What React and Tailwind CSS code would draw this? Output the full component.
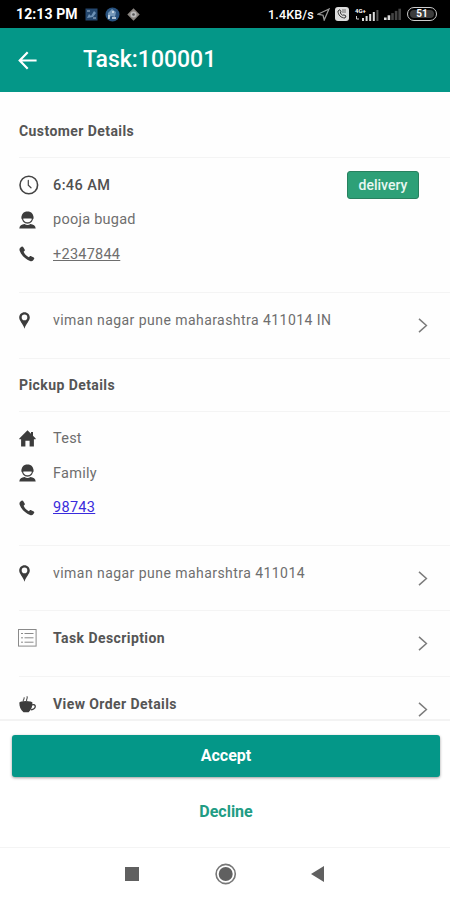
import React from "react";

const ClockIcon = () => (
  <svg width="20" height="20" viewBox="0 0 20 20" fill="none" stroke="#444" strokeWidth="1.6" strokeLinecap="round">
    <circle cx="9.8" cy="10" r="8.8" />
    <path d="M9.3 5.4V10.2L12 12.8" strokeWidth="1.2" />
  </svg>
);

const PersonIcon = () => (
  <svg width="17" height="18" viewBox="0 0 17 18">
    <path d="M3.2 5.5C3 9.5 5.4 12 8.5 12S14 9.5 13.8 5.5" fill="#fff" stroke="#4a4a4a" strokeWidth="1.3" />
    <path d="M2.7 8C1.9 3.2 4.6.6 8.5.6S15.1 3.2 14.3 8C12.8 7.6 10.6 7.6 8.5 7.6S4.2 7.6 2.7 8Z" fill="#3c3c3c" />
    <path d="M.3 17.4C.6 14.8 2.6 13.6 5.6 13.1 7.3 14.3 9.7 14.3 11.4 13.1 14.4 13.6 16.4 14.8 16.7 17.4Z" fill="#3c3c3c" />
  </svg>
);

const PhoneIcon = () => (
  <svg width="16" height="16" viewBox="0 0 17 17">
    <path d="M1.3 1.8 2.7.7C3.3.2 4 .4 4.4 1L6 3.7C6.4 4.4 6.2 4.9 5.7 5.4L4.9 6.2C5.8 8.4 7.8 10.7 10.4 12L11.3 11.1C11.8 10.6 12.4 10.6 13 10.9L15.7 12.3C16.3 12.7 16.4 13.3 16 13.9L14.9 15.4C14.2 16.2 12.9 16.4 11.7 15.9 6.5 14 2.3 9.5.7 5 .3 3.7.5 2.5 1.3 1.8Z" fill="#3c3c3c" />
  </svg>
);

const PinIcon = () => (
  <svg className="ml-px" width="11" height="17" viewBox="0 0 11 17">
    <path fillRule="evenodd" d="M5.5.3C2.5.3.2 2.6.2 5.5.2 8.8 3.9 11.5 5.5 16.7 7.1 11.5 10.8 8.8 10.8 5.5 10.8 2.6 8.5.3 5.5.3ZM5.5 2.6A2.8 2.8 0 1 1 5.5 8.2 2.8 2.8 0 0 1 5.5 2.6Z" fill="#3c3c3c" />
  </svg>
);

const HomeIcon = () => (
  <svg width="17" height="17" viewBox="0 0 17 17">
    <path d="M8.5.3.3 8.4V9.2H2.1V16.6H6.4V10.7H10.6V16.6H14.9V9.2H16.7V8.4L14 5.7V2H12V3.7Z" fill="#3c3c3c" />
  </svg>
);

const ListIcon = () => (
  <svg width="19" height="18" viewBox="0 0 19 18" fill="none" stroke="#8a8a8a">
    <rect x=".5" y=".5" width="17.6" height="16.6" />
    <path d="M3 4.5H5M3 8.8H5M3 13.2H5M6.5 4.5H15.5M6.5 8.8H15.5M6.5 13.2H15.5" />
  </svg>
);

const CupIcon = () => (
  <svg className="ml-px" width="18" height="17" viewBox="0 0 18 17">
    <path d="M.4 6.6C3 8 11 8 13.4 6.6 13.7 10.5 12.2 14 9.6 16.2H4.5C1.7 14 .1 10.5.4 6.6Z" fill="#3c3c3c" />
    <ellipse cx="6.9" cy="6.7" rx="6.4" ry="1.7" fill="#3c3c3c" />
    <path d="M13 8.8C17.4 7.5 17.6 12.8 12 13.8" fill="none" stroke="#3c3c3c" strokeWidth="1.3" />
    <path d="M4.8 6C3 4 6 3.2 4.9 1.4M8.3 6C5.8 3.7 9.6 2.6 7.8.3" fill="none" stroke="#555" strokeWidth="1.1" />
  </svg>
);

const Chevron = () => (
  <svg width="10" height="15" viewBox="0 0 10 15" fill="none" stroke="#7c7c7c" strokeWidth="1.5">
    <path d="M1 .9 8.4 7.5 1 14.1" />
  </svg>
);

function Signal({ active }) {
  return (
    <svg width="18" height="12" viewBox="0 0 18 12">
      {[0, 1, 2, 3, 4].map((i) => (
        <rect key={i} x={i * 3.6} y={9.5 - i * 2.2} width="2.6" height={2.5 + i * 2.2} fill={i < active ? "#ddd" : "#444"} />
      ))}
    </svg>
  );
}

function StatusBar() {
  return (
    <div className="flex h-7 shrink-0 items-center bg-black pl-4 pr-[13px] text-white">
      <span className="w-[62px] whitespace-nowrap pt-px text-[14px] font-bold tracking-[0.1px]">12:13 PM</span>
      <svg className="ml-[7px]" width="13" height="13" viewBox="0 0 13 13">
        <rect x=".5" y=".5" width="12" height="12" fill="#24476e" />
        <path d="M2 10 4 6 6 8 9 3 11 5 8 9Z" fill="#6d91b5" />
        <path d="M2 3H5M8 10H11" stroke="#a8bed1" />
      </svg>
      <svg className="ml-[7px]" width="15" height="15" viewBox="0 0 15 15">
        <circle cx="7.5" cy="7.5" r="7" fill="#28527f" />
        <path d="M3 6 7 2 11 5 10 10 6 9 3 12Z" fill="#7598b9" />
        <path d="M4 8V12M7 11H11M7 5H9" stroke="#dbe6ee" strokeWidth="1.4" />
      </svg>
      <svg className="ml-[7px]" width="13" height="13" viewBox="0 0 13 13">
        <path d="M6.5.3 12.7 6.5 6.5 12.7.3 6.5Z" fill="#8a8580" />
        <circle cx="6.5" cy="6.5" r="3" fill="#bbb" />
        <circle cx="6.5" cy="6.5" r="1.3" fill="#555" />
      </svg>
      <span className="ml-auto w-[48px] whitespace-nowrap pt-[2px] text-[12.5px] font-medium tracking-[0.15px]">1.4KB/s</span>
      <svg className="ml-px" width="13" height="13" viewBox="0 0 13 13" fill="none" stroke="#999" strokeWidth="1.3">
        <path d="M12 1 .9 6.2 6 7.2 7.2 12Z" />
      </svg>
      <svg className="ml-[5px]" width="14" height="14" viewBox="0 0 14 14">
        <rect width="14" height="14" rx="3" fill="#ddd" />
        <path d="M3 4C3 8 6 11 10 11L11 9 8.8 7.8 7.8 8.6 5.3 6 6 4.8 4.8 2.7Z" fill="none" stroke="#333" />
        <path d="M7 3H11M7 5H11" stroke="#555" strokeWidth=".8" />
      </svg>
      <div className="ml-[6px] flex h-[14px] w-[24px] items-end">
        <div className="flex h-[14px] w-[6px] flex-col justify-between">
          <span className="whitespace-nowrap text-[6px] font-bold leading-[7px]">4G+</span>
          <svg width="5" height="5" viewBox="0 0 5 5"><path d="M1.5 0V3H4" fill="none" stroke="#ccc" /></svg>
        </div>
        <svg width="18" height="11" viewBox="0 0 18 11">
          <path d="M1 8H3V11H1ZM4.6 6H6.6V11H4.6ZM8.2 4H10.2V11H8.2ZM11.8 2H13.8V11H11.8Z" fill="#ddd" />
          <path d="M15.4 0H17.4V11H15.4Z" fill="#555" />
        </svg>
      </div>
      <div className="ml-[5px] flex"><Signal active={2} /></div>
      <div className="ml-[5px] flex h-[14px] w-[30px] items-center justify-center rounded-full border-[1.5px] border-[#ccc] p-[2px]">
        <div className="flex h-full w-full items-center justify-center rounded-full bg-[#3c3c3c] text-[10px] font-bold leading-none">51</div>
      </div>
    </div>
  );
}

function SectionTitle({ children, className }) {
  return (
    <div className={`flex items-center border-b border-[#f4f4f4] ${className}`}>
      <h2 className="text-[14px] font-bold tracking-[0.42px] text-[#555]">{children}</h2>
    </div>
  );
}

function Row({ icon, children, className = "", right }) {
  return (
    <div className="flex h-[34.5px] items-center pr-[31px]">
      <div className="flex w-[34px] shrink-0 items-center">{icon}</div>
      <span className={`whitespace-nowrap pt-px text-[14.5px] leading-5 ${className}`}>{children}</span>
      {right}
    </div>
  );
}

function LinkRow({ icon, children, className = "", textClass }) {
  return (
    <div className={`flex border-b border-[#f4f4f4] pr-[22px] pt-[17px] ${className}`}>
      <div className="-ml-px flex h-5 w-[35px] shrink-0 items-center">{icon}</div>
      <span className={`whitespace-nowrap leading-5 ${textClass}`}>{children}</span>
      <div className="ml-auto mt-2"><Chevron /></div>
    </div>
  );
}

const muted = "tracking-[0.25px] text-[#6e6e6e]";
const address = "text-[14px] tracking-[0.45px] text-[#6e6e6e]";
const strong = "text-[14px] font-bold tracking-[0.42px] text-[#555]";

export default function App() {
  return (
    <div className="flex h-[900px] w-[450px] flex-col overflow-hidden bg-white font-[Roboto,sans-serif]">
      <StatusBar />
      <header className="flex h-16 shrink-0 items-center bg-[#049788] pl-[18px] text-white">
        <svg width="19" height="19" viewBox="0 0 19 19" fill="none" stroke="#fff" strokeWidth="2.2">
          <path d="M18.6 9.5H2M9.7 1.3 1.7 9.5 9.7 17.7" />
        </svg>
        <h1 className="ml-[46px] whitespace-nowrap pt-px text-[23px] font-medium">Task:100001</h1>
      </header>

      <main className="min-h-0 flex-1 overflow-hidden bg-[#fefefe] pl-[19px]">
        <SectionTitle className="h-[66px] pt-[14px]">Customer Details</SectionTitle>
        <div className="h-[135px] border-b border-[#f4f4f4] pt-[10px]">
          <Row
            icon={<ClockIcon />}
            className="font-medium tracking-[0.4px] text-[#505050]"
            right={<span className="ml-auto flex h-7 w-[72px] items-center justify-center rounded-[3px] border border-[#28815f] bg-[#2da077] text-[14px] font-medium text-[#e8f7f1]">delivery</span>}
          >
            6:46 AM
          </Row>
          <Row icon={<PersonIcon />} className={muted}>pooja bugad</Row>
          <Row icon={<PhoneIcon />} className={`underline ${muted}`}>+2347844</Row>
        </div>
        <LinkRow icon={<PinIcon />} className="h-[66px]" textClass={address}>viman nagar pune maharashtra 411014 IN</LinkRow>

        <SectionTitle className="h-[53px]">Pickup Details</SectionTitle>
        <div className="h-[134px] border-b border-[#f4f4f4] pt-[9.5px]">
          <Row icon={<HomeIcon />} className={muted}>Test</Row>
          <Row icon={<PersonIcon />} className={muted}>Family</Row>
          <Row icon={<PhoneIcon />} className="tracking-[0.3px] text-[#3a2bdc] underline">98743</Row>
        </div>
        <LinkRow icon={<PinIcon />} className="h-[65px]" textClass={address}>viman nagar pune maharshtra 411014</LinkRow>
        <LinkRow icon={<ListIcon />} className="h-[66px]" textClass={strong}>Task Description</LinkRow>
        <LinkRow icon={<CupIcon />} className="h-[66px]" textClass={strong}>View Order Details</LinkRow>
      </main>

      <footer className="flex h-[128px] shrink-0 flex-col border-t-2 border-[#f3f3f3] pl-3 pr-[10px] pt-[14px] text-[16px] font-bold">
        <button className="h-[42px] w-full shrink-0 rounded-[3px] bg-[#049788] text-white shadow-[0_1px_3px_rgba(0,0,0,0.4)]">Accept</button>
        <button className="mt-[14px] h-[41px] w-full text-[#219c84]">Decline</button>
      </footer>

      <nav className="flex h-[53px] shrink-0 items-center border-t border-[#f4f4f4] pl-[125px]">
        <div className="size-[14px] bg-[#606060]" />
        <svg className="ml-[76px]" width="22" height="22" viewBox="0 0 22 22">
          <circle cx="10.7" cy="11" r="9.6" fill="none" stroke="#777" strokeWidth="1.6" />
          <circle cx="10.7" cy="11" r="7" fill="#606060" />
        </svg>
        <svg className="ml-[74px]" width="13" height="16" viewBox="0 0 13 16">
          <path d="M13 0V16L0 8Z" fill="#606060" />
        </svg>
      </nav>
    </div>
  );
}
